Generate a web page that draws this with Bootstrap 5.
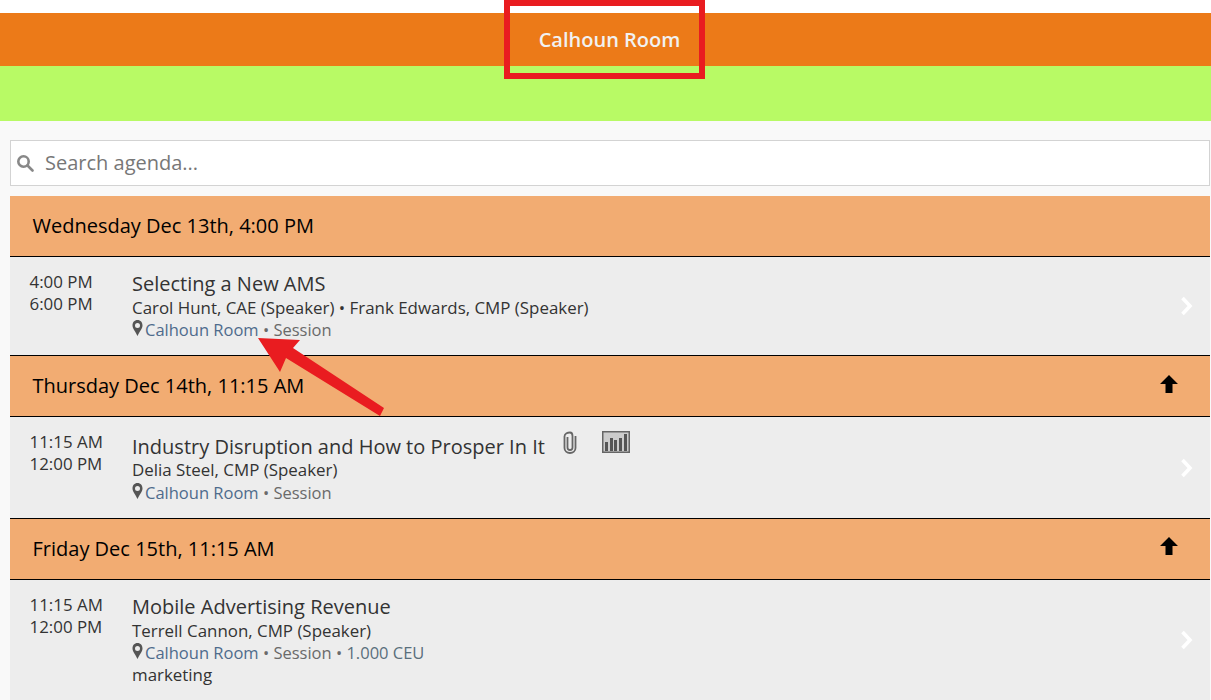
<!DOCTYPE html>
<html lang="en">
<head>
  <meta charset="UTF-8">
  <title>Calhoun Room</title>
  <meta name="viewport" content="width=device-width, initial-scale=1.0"/>
  <link href="https://cdn.jsdelivr.net/npm/bootstrap@5.3.3/dist/css/bootstrap.min.css" rel="stylesheet">
  <style>
    html, body {
      height: 700px;
      overflow: hidden;
    }
    body {
      position: relative;
      background-color: #f9f9f9;
      font-family: "Open Sans", sans-serif;
      font-size: 16.9px;
      line-height: 22px;
      color: #333;
    }
    .top-gap { height: 13px; background: #fff; }
    .room-bar {
      height: 53px;
      padding-left: 8px;
      background: #ec7a18;
      color: #f1f1f1;
      font-size: 20px;
      font-weight: 600;
    }
    .green-bar { height: 55px; background: #b8fa65; }
    .agenda { padding: 19px 1px 0 10px; }
    .search-box {
      height: 46px;
      margin-bottom: 10px;
      background: #fff;
      border: 1px solid #d3d3d3;
      color: #777;
      font-size: 20px;
    }
    .search-box svg { margin: 0 11px 0 5px; }
    .day-head {
      height: 61px;
      padding: 0 32px 0 22.5px;
      background: #f2ac72;
      border-bottom: 1px solid #000;
      color: #000;
      font-size: 20px;
    }
    .day-head svg { margin-bottom: 5px; }
    .day-head svg.arrow-high { margin-bottom: 7px; }
    .session {
      position: relative;
      display: flex;
      background: #ededed;
      border-bottom: 1px solid #000;
      padding: 14px 0 14px 19.5px;
    }
    .session-last { border-bottom: 0; height: 120px; }
    .times { width: 102.5px; flex: none; }
    .title-line { font-size: 20px; line-height: 26px; white-space: nowrap; }
    .title-icons { height: 28px; }
    .title-icons .title-line { padding-top: 3px; }
    .title-icons + div + .place { margin-top: 1px; }
    .clip-icon { margin-left: 17px; }
    .chart-icon { margin-left: 24px; }
    .place { color: #6a6a6a; font-size: 16.5px; }
    .place a { color: #4f6b8c; text-decoration: none; }
    .place .ceu { color: #5a6f7c; }
    .pin { vertical-align: 0; margin-right: 2px; }
    .go-arrow { position: absolute; right: 17px; top: 50%; margin-top: -10px; }
    .callout-box {
      position: absolute;
      left: 504px;
      top: 0;
      width: 201px;
      height: 79px;
      border: 6px solid #e91c20;
    }
    .callout-arrow { position: absolute; left: 255px; top: 335px; }
  </style>
</head>
<body>

<div class="top-gap"></div>
<div class="room-bar d-flex align-items-center justify-content-center">Calhoun Room</div>
<div class="green-bar"></div>

<div class="agenda">
  <div class="search-box d-flex align-items-center">
    <svg width="18" height="18" viewBox="0 0 18 18" fill="none" stroke="#888" stroke-width="2.6"><circle cx="7.5" cy="7.5" r="5.2"/><path d="M11.5 11.5 16.5 16.5" stroke-linecap="round"/></svg>
    <span>Search agenda...</span>
  </div>

  <div class="day-head d-flex align-items-center justify-content-between">
    <span>Wednesday Dec 13th, 4:00 PM</span>
  </div>
  <div class="session">
    <div class="times">4:00 PM<br>6:00 PM</div>
    <div>
      <div class="title-line">Selecting a New AMS</div>
      <div>Carol Hunt, CAE (Speaker) • Frank Edwards, CMP (Speaker)</div>
      <div class="place"><svg class="pin" width="11" height="16" viewBox="0 0 11 16"><path fill="#555" fill-rule="evenodd" d="M5.5 0C2.400 0 .5 2.400.5 5.400.5 8.600 3.900 12 5.500 16 7.100 12 10.500 8.600 10.500 5.400 10.500 2.400 8.600 0 5.500 0ZM5.500 3a2.500 2.500 0 1 1 0 5 2.500 2.500 0 0 1 0-5Z"/></svg><a href="#">Calhoun Room</a> • Session</div>
    </div>
    <svg class="go-arrow" width="13" height="20" viewBox="0 0 13 20" fill="none" stroke="#fff" stroke-width="3.6"><path d="M2.500 2 10 10 2.500 18"/></svg>
  </div>

  <div class="day-head d-flex align-items-center justify-content-between">
    <span>Thursday Dec 14th, 11:15 AM</span>
    <svg width="18" height="18" viewBox="0 0 18 18"><path d="M9 0 18 9H12.500V18H5.500V9H0Z" fill="#000"/></svg>
  </div>
  <div class="session">
    <div class="times">11:15 AM<br>12:00 PM</div>
    <div>
      <div class="title-icons d-flex align-items-start">
        <div class="title-line">Industry Disruption and How to Prosper In It</div>
        <svg class="clip-icon" width="16" height="23" viewBox="0 0 16 23" fill="none" stroke="#666" stroke-width="1.800"><path d="M5.500 6V16.500C5.500 18 6.500 19 8 19S10.500 18 10.500 16.500V5C10.500 2.800 9.500 1.500 8 1.500 6 1.500 2.500 2.500 2.500 5.500V17C2.500 20 5 22 8 22S13.500 20 13.500 17V5"/></svg>
        <svg class="chart-icon" width="28" height="22" viewBox="0 0 28 22"><rect x=".75" y=".75" width="26.500" height="20.500" fill="#ccc" stroke="#666" stroke-width="1.500"/><path d="M3 20V11H6V20ZM8 20V7H11V20ZM12 20V9H15V20ZM17 20V7H20V20ZM22 20V3H25V20Z" fill="#555"/></svg>
      </div>
      <div>Delia Steel, CMP (Speaker)</div>
      <div class="place"><svg class="pin" width="11" height="16" viewBox="0 0 11 16"><path fill="#555" fill-rule="evenodd" d="M5.5 0C2.400 0 .5 2.400.5 5.400.5 8.600 3.900 12 5.500 16 7.100 12 10.500 8.600 10.500 5.400 10.500 2.400 8.600 0 5.500 0ZM5.500 3a2.500 2.500 0 1 1 0 5 2.500 2.500 0 0 1 0-5Z"/></svg><a href="#">Calhoun Room</a> • Session</div>
    </div>
    <svg class="go-arrow" width="13" height="20" viewBox="0 0 13 20" fill="none" stroke="#fff" stroke-width="3.6"><path d="M2.500 2 10 10 2.500 18"/></svg>
  </div>

  <div class="day-head d-flex align-items-center justify-content-between">
    <span>Friday Dec 15th, 11:15 AM</span>
    <svg class="arrow-high" width="18" height="18" viewBox="0 0 18 18"><path d="M9 0 18 9H12.500V18H5.500V9H0Z" fill="#000"/></svg>
  </div>
  <div class="session session-last">
    <div class="times">11:15 AM<br>12:00 PM</div>
    <div>
      <div class="title-line">Mobile Advertising Revenue</div>
      <div>Terrell Cannon, CMP (Speaker)</div>
      <div class="place"><svg class="pin" width="11" height="16" viewBox="0 0 11 16"><path fill="#555" fill-rule="evenodd" d="M5.5 0C2.400 0 .5 2.400.5 5.400.5 8.600 3.900 12 5.500 16 7.100 12 10.500 8.600 10.500 5.400 10.500 2.400 8.600 0 5.500 0ZM5.500 3a2.500 2.500 0 1 1 0 5 2.500 2.500 0 0 1 0-5Z"/></svg><a href="#">Calhoun Room</a> • Session • <span class="ceu">1.000 CEU</span></div>
      <div>marketing</div>
    </div>
    <svg class="go-arrow" width="13" height="20" viewBox="0 0 13 20" fill="none" stroke="#fff" stroke-width="3.6"><path d="M2.500 2 10 10 2.500 18"/></svg>
  </div>
</div>

<!-- annotation drawn over the screenshot -->
<div class="callout-box"></div>
<svg class="callout-arrow" width="135" height="85" viewBox="0 0 135 85"><path d="M3 3 45 5 38 13 129 73 125 81 31 23 25 37Z" fill="#e91c20"/></svg>

<script src="https://cdn.jsdelivr.net/npm/bootstrap@5.3.3/dist/js/bootstrap.bundle.min.js"></script>
</body>
</html>
